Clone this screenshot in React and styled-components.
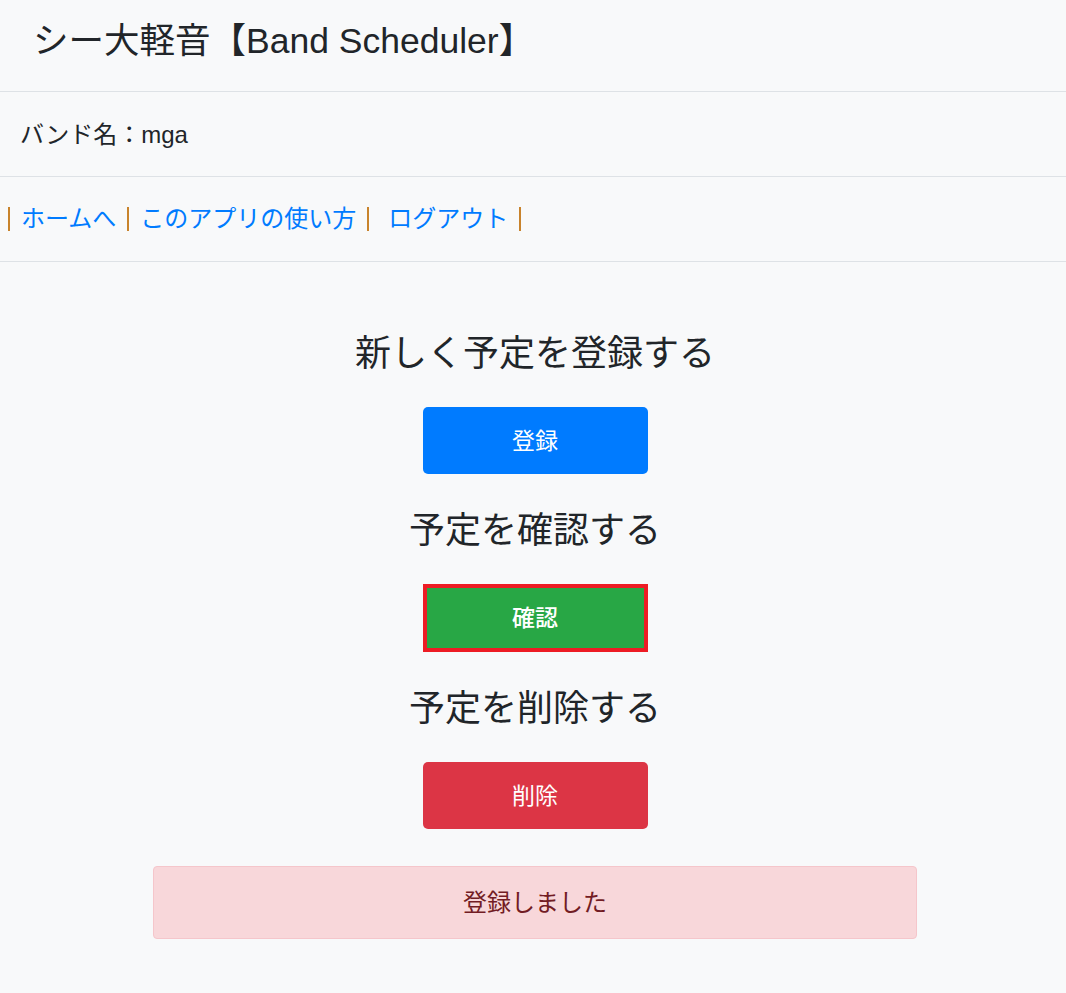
import React, { useState } from 'react'
import styled, { createGlobalStyle } from 'styled-components'

const GlobalStyle = createGlobalStyle`
  body {
    margin: 0;
    background: #f8f9fa;
    color: #212529;
    font-family: "Liberation Sans", "Noto Sans CJK JP", sans-serif;
  }
`

const Page = styled.div`
  min-height: 993px;
  background: #f8f9fa;
`
const Header = styled.header`
  height: 92px;
  box-sizing: border-box;
  display: flex;
  align-items: center;
  padding: 0 0 10px 33px;
  border-bottom: 1px solid #dee2e6;
`
const Title = styled.h1`
  margin: 0;
  font-size: 35.5px;
  font-weight: 400;
  line-height: 42px;
`
const Row = styled.div`
  height: 85px;
  box-sizing: border-box;
  display: flex;
  align-items: center;
  padding: 0 0 ${props => props.lift ?? 0}px ${props => props.pad ?? 20}px;
  border-bottom: 1px solid #dee2e6;
  font-size: 24px;
`
const Nav = styled.nav`
  display: flex;
  align-items: center;
`
const Sep = styled.span`
  display: inline-block;
  width: 2px;
  height: 24px;
  background: #c8832c;
  margin: 0 ${props => props.right ?? 11}px 0 ${props => props.left ?? 11}px;
`
const Link = styled.a`
  color: #007bff;
  text-decoration: none;
  font-size: 24px;
  line-height: 30px;
  cursor: pointer;
`
const Main = styled.main`
  display: flex;
  flex-direction: column;
  align-items: center;
  padding: 70px 0 0 4px;
`
const Heading = styled.h2`
  margin: ${props => props.first ? 0 : 35}px 0 31px;
  font-size: 36px;
  font-weight: 400;
  line-height: 44px;
`
const Button = styled.button`
  width: 225px;
  height: ${props => props.selected ? 68 : 67}px;
  box-sizing: border-box;
  padding: 0 0 4px;
  border: ${props => props.selected ? '4px solid #ed1c24' : 'none'};
  border-radius: ${props => props.selected ? 0 : 5}px;
  background: ${props => props.color};
  color: #fff;
  font-family: inherit;
  font-size: 23px;
  font-weight: ${props => props.selected ? 500 : 400};
  cursor: pointer;
`
const Alert = styled.div`
  width: 764px;
  height: 73px;
  box-sizing: border-box;
  margin-top: 37px;
  padding-bottom: 4px;
  display: flex;
  align-items: center;
  justify-content: center;
  background: #f8d7da;
  border: 1px solid #f5c6cb;
  border-radius: 4px;
  color: #721c24;
  font-size: 24px;
`

const App = () => {
  const [message] = useState('登録しました')

  return (
    <Page>
      <GlobalStyle />
      <Header>
        <Title>シー大軽音【Band Scheduler】</Title>
      </Header>
      <Row lift={4}>バンド名：mga</Row>
      <Row pad={8}>
        <Nav>
          <Sep left={0} />
          <Link>ホームへ</Link>
          <Sep />
          <Link>このアプリの使い方</Link>
          <Sep right={19} />
          <Link>ログアウト</Link>
          <Sep />
        </Nav>
      </Row>
      <Main>
        <Heading first>新しく予定を登録する</Heading>
        <Button color="#007bff">登録</Button>
        <Heading>予定を確認する</Heading>
        <Button color="#28a745" selected>確認</Button>
        <Heading>予定を削除する</Heading>
        <Button color="#dc3545">削除</Button>
        {message ? <Alert>{message}</Alert> : ''}
      </Main>
    </Page>
  )
}

export default App
